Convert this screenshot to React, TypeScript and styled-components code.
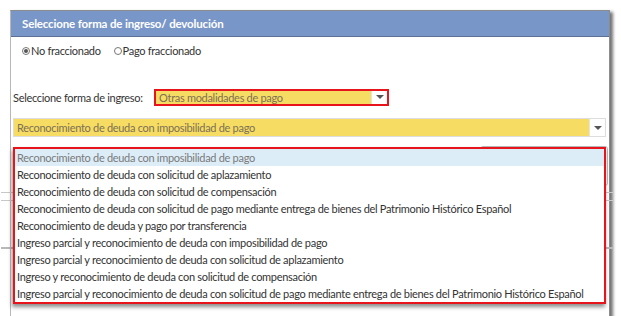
import React from "react";
import styled, { createGlobalStyle } from "styled-components";

const Global = createGlobalStyle`
  html, body { margin: 0; padding: 0; background: #fff; }
  body { font-family: "Lato", "Open Sans", sans-serif; overflow: hidden; letter-spacing: -0.3px; }
  * { box-sizing: border-box; }
`;

const Page = styled.div`
  width: 621px;
  height: 316px;
  padding: 10px 0 0 10px;
  position: relative;
  overflow: hidden;
`;

const Window = styled.div`
  width: 600px;
  height: 320px;
  border: 1px solid #8c8c8c;
  border-left-color: #b8b8b8;
  box-shadow: 3px 2px 3px rgba(0, 0, 0, 0.55);
  background: #fff;
  display: flex;
  flex-direction: column;
`;

const Header = styled.div`
  height: 26px;
  background: #7996c9;
  border-bottom: 1px solid #5d6f93;
  color: #fff;
  font-weight: 700;
  font-size: 11.5px;
  letter-spacing: -0.15px;
  display: flex;
  align-items: center;
  padding-left: 11px;
`;

const Body = styled.div`
  position: relative;
  flex: 1;
  padding: 5px 3px 0 2px;
  display: flex;
  flex-direction: column;
`;

const RadioRow = styled.div`
  display: flex;
  align-items: center;
  gap: 13px;
  height: 17px;
  padding-left: 9px;
  font-size: 11px;
  color: #333;
`;

const RadioLabel = styled.label`
  display: flex;
  align-items: center;
  gap: 1px;
`;

const RadioDot = styled.span<{ $on?: boolean }>`
  width: 8px;
  height: 8px;
  border-radius: 50%;
  border: 1px solid #777;
  background: #fff;
  display: inline-flex;
  align-items: center;
  justify-content: center;
  &::after {
    content: "";
    width: 4px;
    height: 4px;
    border-radius: 50%;
    background: ${(p) => (p.$on ? "#555" : "transparent")};
  }
`;

const FormRow = styled.div`
  display: flex;
  align-items: center;
  margin-top: 29px;
  height: 18px;
  font-size: 11px;
  color: #333;
`;

const Label = styled.span`
  width: 141px;
  white-space: nowrap;
`;

const Select = styled.div<{ $w: string; $red?: boolean }>`
  width: ${(p) => p.$w};
  height: ${(p) => (p.$red ? "17px" : "19px")};
  display: flex;
  border: ${(p) => (p.$red ? "2px solid #e8141c" : "1px solid #ddd")};
  background: #f7dc63;
  font-size: 11px;
  color: #7c7055;
`;

const SelectText = styled.div`
  flex: 1;
  display: flex;
  align-items: center;
  padding-left: 3px;
  white-space: nowrap;
  overflow: hidden;
`;

const Arrow = styled.div`
  width: 16px;
  background: #fff;
  border-left: 1px solid #e4e4e4;
  display: flex;
  align-items: center;
  justify-content: center;
  &::after {
    content: "";
    border-left: 4px solid transparent;
    border-right: 4px solid transparent;
    border-top: 4px solid #555;
  }
`;

const SecondSelectRow = styled.div`
  margin-top: 12px;
`;

const BackButton = styled.div`
  position: absolute;
  top: 109px;
  left: 469px;
  width: 128px;
  height: 40px;
  border: 1px solid #bbb;
  border-radius: 3px;
`;

const BgBand = styled.div<{ $top: number }>`
  position: absolute;
  left: -10px;
  right: -4px;
  top: ${(p) => p.$top}px;
  height: 9px;
  border-top: 1px solid #c8c8c8;
  border-bottom: 1px solid #c8c8c8;
`;

const BgLine = styled.div<{ $top: number }>`
  position: absolute;
  left: -10px;
  right: -4px;
  top: ${(p) => p.$top}px;
  border-top: 2px solid #b8b8b8;
`;

const Dropdown = styled.ul`
  position: absolute;
  left: 13px;
  top: 147px;
  width: 593px;
  height: 157px;
  margin: 0;
  padding: 0;
  list-style: none;
  border: 2px solid #e8141c;
  background: #fff;
  box-shadow: -1px 3px 4px rgba(0, 0, 0, 0.45);
  z-index: 5;
`;

const Option = styled.li<{ $active?: boolean }>`
  height: 17px;
  line-height: 17px;
  padding-left: 2px;
  font-size: 11px;
  white-space: nowrap;
  color: ${(p) => (p.$active ? "#7a7a7a" : "#333")};
  background: ${(p) => (p.$active ? "#ddedf8" : "transparent")};
`;

const options = [
  "Reconocimiento de deuda con imposibilidad de pago",
  "Reconocimiento de deuda con solicitud de aplazamiento",
  "Reconocimiento de deuda con solicitud de compensación",
  "Reconocimiento de deuda con solicitud de pago mediante entrega de bienes del Patrimonio Histórico Español",
  "Reconocimiento de deuda y pago por transferencia",
  "Ingreso parcial y reconocimiento de deuda con imposibilidad de pago",
  "Ingreso parcial y reconocimiento de deuda con solicitud de aplazamiento",
  "Ingreso y reconocimiento de deuda con solicitud de compensación",
  "Ingreso parcial y reconocimiento de deuda con solicitud de pago mediante entrega de bienes del Patrimonio Histórico Español",
];

export default function App() {
  return (
    <>
      <Global />
      <Page>
        <Window>
          <Header>Seleccione forma de ingreso/ devolución</Header>
          <Body>
            <RadioRow>
              <RadioLabel>
                <RadioDot $on />
                No fraccionado
              </RadioLabel>
              <RadioLabel>
                <RadioDot />
                Pago fraccionado
              </RadioLabel>
            </RadioRow>
            <FormRow>
              <Label>Seleccione forma de ingreso:</Label>
              <Select $w="235px" $red>
                <SelectText>Otras modalidades de pago</SelectText>
                <Arrow />
              </Select>
            </FormRow>
            <SecondSelectRow>
              <Select $w="593px">
                <SelectText>Reconocimiento de deuda con imposibilidad de pago</SelectText>
                <Arrow />
              </Select>
            </SecondSelectRow>
            <BackButton />
            <BgBand $top={155} />
            <BgLine $top={210} />
          </Body>
        </Window>
        <Dropdown>
          {options.map((o, i) => (
            <Option key={i} $active={i === 0}>
              {o}
            </Option>
          ))}
        </Dropdown>
      </Page>
    </>
  );
}
